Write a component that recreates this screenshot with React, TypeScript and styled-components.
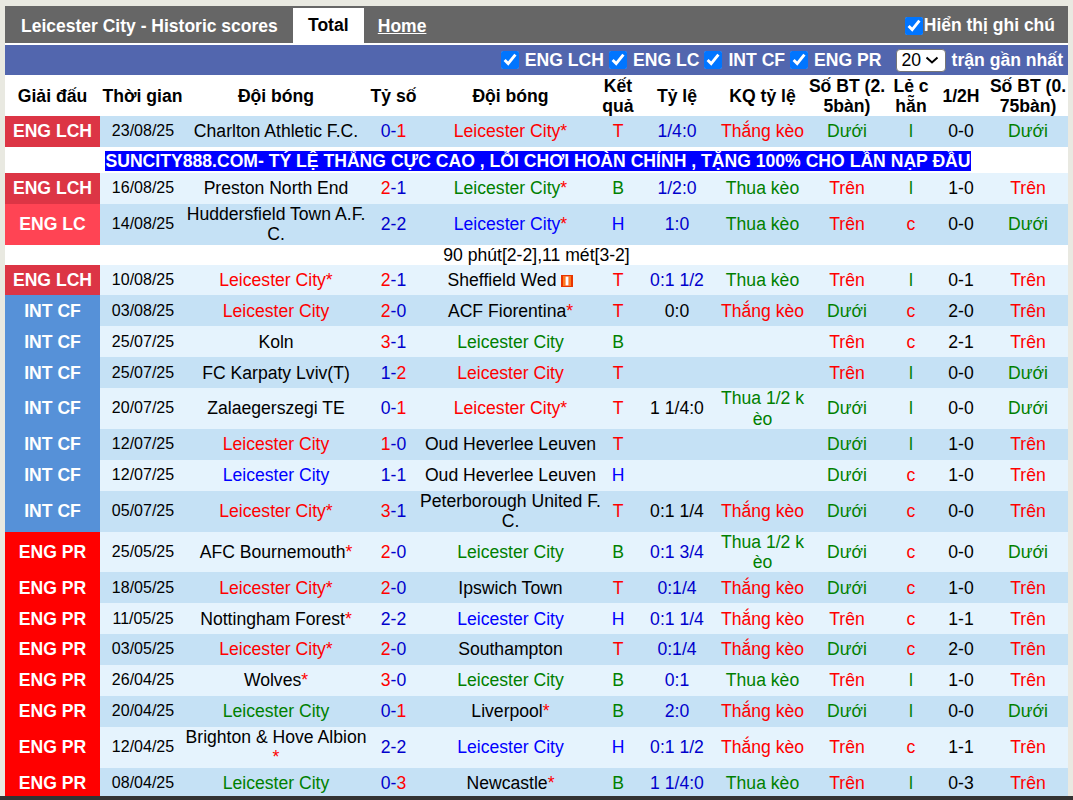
import React from 'react'
import styled, { createGlobalStyle } from 'styled-components'

type Tone = 'red' | 'blue' | 'green' | 'black'

const tones: Record<Tone, string> = {
  red: '#ff0000',
  blue: '#0000ff',
  green: '#008000',
  black: '#000000',
}

const leagues: Record<string, string> = {
  'ENG LCH': '#dc3545',
  'ENG LC': '#ff4454',
  'INT CF': '#5691d8',
  'ENG PR': '#ff0000',
}

interface Match {
  league: string
  date: string
  home: string
  homeTone?: Tone
  homeStar?: boolean
  score: [number, number]
  away: string
  awayTone?: Tone
  awayStar?: boolean
  card?: boolean
  odds?: string
  oddsBlack?: boolean
  kq?: string
  bt: string
  lc: string
  half: string
  bt2: string
  banner?: boolean
  note?: string
}

const LC = 'Leicester City'

const matches: Match[] = [
  { league: 'ENG LCH', date: '23/08/25', home: 'Charlton Athletic F.C.', score: [0, 1], away: LC, awayTone: 'red', awayStar: true, odds: '1/4:0', kq: 'Thắng kèo', bt: 'Dưới', lc: 'l', half: '0-0', bt2: 'Dưới', banner: true },
  { league: 'ENG LCH', date: '16/08/25', home: 'Preston North End', score: [2, 1], away: LC, awayTone: 'green', awayStar: true, odds: '1/2:0', kq: 'Thua kèo', bt: 'Trên', lc: 'l', half: '1-0', bt2: 'Trên' },
  { league: 'ENG LC', date: '14/08/25', home: 'Huddersfield Town A.F.C.', score: [2, 2], away: LC, awayTone: 'blue', awayStar: true, odds: '1:0', kq: 'Thua kèo', bt: 'Trên', lc: 'c', half: '0-0', bt2: 'Dưới', note: '90 phút[2-2],11 mét[3-2]' },
  { league: 'ENG LCH', date: '10/08/25', home: LC, homeTone: 'red', homeStar: true, score: [2, 1], away: 'Sheffield Wed', card: true, odds: '0:1 1/2', kq: 'Thua kèo', bt: 'Trên', lc: 'l', half: '0-1', bt2: 'Trên' },
  { league: 'INT CF', date: '03/08/25', home: LC, homeTone: 'red', score: [2, 0], away: 'ACF Fiorentina', awayStar: true, odds: '0:0', oddsBlack: true, kq: 'Thắng kèo', bt: 'Dưới', lc: 'c', half: '2-0', bt2: 'Trên' },
  { league: 'INT CF', date: '25/07/25', home: 'Koln', score: [3, 1], away: LC, awayTone: 'green', bt: 'Trên', lc: 'c', half: '2-1', bt2: 'Trên' },
  { league: 'INT CF', date: '25/07/25', home: 'FC Karpaty Lviv(T)', score: [1, 2], away: LC, awayTone: 'red', bt: 'Trên', lc: 'l', half: '0-0', bt2: 'Dưới' },
  { league: 'INT CF', date: '20/07/25', home: 'Zalaegerszegi TE', score: [0, 1], away: LC, awayTone: 'red', awayStar: true, odds: '1 1/4:0', oddsBlack: true, kq: 'Thua 1/2 kèo', bt: 'Dưới', lc: 'l', half: '0-0', bt2: 'Dưới' },
  { league: 'INT CF', date: '12/07/25', home: LC, homeTone: 'red', score: [1, 0], away: 'Oud Heverlee Leuven', bt: 'Dưới', lc: 'l', half: '1-0', bt2: 'Trên' },
  { league: 'INT CF', date: '12/07/25', home: LC, homeTone: 'blue', score: [1, 1], away: 'Oud Heverlee Leuven', bt: 'Dưới', lc: 'c', half: '1-0', bt2: 'Trên' },
  { league: 'INT CF', date: '05/07/25', home: LC, homeTone: 'red', homeStar: true, score: [3, 1], away: 'Peterborough United F.C.', odds: '0:1 1/4', oddsBlack: true, kq: 'Thắng kèo', bt: 'Dưới', lc: 'c', half: '0-0', bt2: 'Trên' },
  { league: 'ENG PR', date: '25/05/25', home: 'AFC Bournemouth', homeStar: true, score: [2, 0], away: LC, awayTone: 'green', odds: '0:1 3/4', kq: 'Thua 1/2 kèo', bt: 'Dưới', lc: 'c', half: '0-0', bt2: 'Dưới' },
  { league: 'ENG PR', date: '18/05/25', home: LC, homeTone: 'red', homeStar: true, score: [2, 0], away: 'Ipswich Town', odds: '0:1/4', kq: 'Thắng kèo', bt: 'Dưới', lc: 'c', half: '1-0', bt2: 'Trên' },
  { league: 'ENG PR', date: '11/05/25', home: 'Nottingham Forest', homeStar: true, score: [2, 2], away: LC, awayTone: 'blue', odds: '0:1 1/4', kq: 'Thắng kèo', bt: 'Trên', lc: 'c', half: '1-1', bt2: 'Trên' },
  { league: 'ENG PR', date: '03/05/25', home: LC, homeTone: 'red', homeStar: true, score: [2, 0], away: 'Southampton', odds: '0:1/4', kq: 'Thắng kèo', bt: 'Dưới', lc: 'c', half: '2-0', bt2: 'Trên' },
  { league: 'ENG PR', date: '26/04/25', home: 'Wolves', homeStar: true, score: [3, 0], away: LC, awayTone: 'green', odds: '0:1', kq: 'Thua kèo', bt: 'Trên', lc: 'l', half: '1-0', bt2: 'Trên' },
  { league: 'ENG PR', date: '20/04/25', home: LC, homeTone: 'green', score: [0, 1], away: 'Liverpool', awayStar: true, odds: '2:0', kq: 'Thắng kèo', bt: 'Dưới', lc: 'l', half: '0-0', bt2: 'Dưới' },
  { league: 'ENG PR', date: '12/04/25', home: 'Brighton & Hove Albion', homeStar: true, score: [2, 2], away: LC, awayTone: 'blue', odds: '0:1 1/2', kq: 'Thắng kèo', bt: 'Trên', lc: 'c', half: '1-1', bt2: 'Trên' },
  { league: 'ENG PR', date: '08/04/25', home: LC, homeTone: 'green', score: [0, 3], away: 'Newcastle', awayStar: true, odds: '1 1/4:0', kq: 'Thua kèo', bt: 'Trên', lc: 'l', half: '0-3', bt2: 'Trên' },
]

const columns = [95, 85, 182, 53, 181, 34, 84, 87, 82, 46, 54, 80]

const chevron =
  "url(\"data:image/svg+xml,%3Csvg xmlns='http://www.w3.org/2000/svg' width='14' height='8' viewBox='0 0 14 8'%3E%3Cpath d='M1.5 1.5 7 6.5l5.5-5' fill='none' stroke='%23000' stroke-width='2'/%3E%3C/svg%3E\")"

const resultOf = (m: Match) => {
  const leicesterHome = m.home === LC
  const us = leicesterHome ? m.score[0] : m.score[1]
  const them = leicesterHome ? m.score[1] : m.score[0]
  if (us > them) return { text: 'T', tone: 'red' as Tone }
  if (us < them) return { text: 'B', tone: 'green' as Tone }
  return { text: 'H', tone: 'blue' as Tone }
}

const Team = ({ name, tone, star, card }: { name: string; tone?: Tone; star?: boolean; card?: boolean }) => (
  <TeamCell>
    <Colored $tone={tone || 'black'}>{name}</Colored>
    {star && <Colored $tone="red">*</Colored>}
    {card && (
      <Card viewBox="0 0 12 12">
        <rect width="12" height="12" fill="#e83400" />
        <rect x="2" y="1" width="2.5" height="10" fill="#ff7a20" />
        <rect x="7.5" y="1" width="2.5" height="10" fill="#ff7a20" />
        <rect x="4.5" y="1.5" width="3" height="9" fill="#fff" />
      </Card>
    )}
  </TeamCell>
)

const Score = ({ value }: { value: [number, number] }) => {
  const [a, b] = value
  return (
    <Td>
      <Colored $tone={a > b ? 'red' : 'blue'} $navy={a <= b}>{a}</Colored>
      <Colored $tone="blue" $navy>-</Colored>
      <Colored $tone={b > a ? 'red' : 'blue'} $navy={b <= a}>{b}</Colored>
    </Td>
  )
}

const App = () => {
  return (
    <Page>
      <GlobalStyle />
      <Wrapper>
        <TopBar>
          <TopTitle>Leicester City - Historic scores</TopTitle>
          <ActiveTab>Total</ActiveTab>
          <LinkTab href="#">Home</LinkTab>
          <NoteToggle>
            <Check type="checkbox" defaultChecked />
            Hiển thị ghi chú
          </NoteToggle>
        </TopBar>
        <FilterBar>
          {['ENG LCH', 'ENG LC', 'INT CF', 'ENG PR'].map((l) => (
            <FilterLabel key={l}>
              <Check type="checkbox" defaultChecked />
              {l}
            </FilterLabel>
          ))}
          <CountSelect defaultValue="20">
            <option value="10">10</option>
            <option value="20">20</option>
          </CountSelect>
          <FilterText>trận gần nhất</FilterText>
        </FilterBar>
        <Table>
          <colgroup>
            {columns.map((w, i) => (
              <col key={i} style={{ width: w }} />
            ))}
          </colgroup>
          <thead>
            <tr>
              <Th>Giải đấu</Th>
              <Th>Thời gian</Th>
              <Th>Đội bóng</Th>
              <Th>Tỷ số</Th>
              <Th>Đội bóng</Th>
              <Th>Kết<br />quả</Th>
              <Th>Tỷ lệ</Th>
              <Th>KQ tỷ lệ</Th>
              <Th>Số BT (2.<br />5bàn)</Th>
              <Th>Lẻ c<br />hẵn</Th>
              <Th>1/2H</Th>
              <Th>Số BT (0.<br />75bàn)</Th>
            </tr>
          </thead>
          <tbody>
            {matches.map((m, i) => {
              const result = resultOf(m)
              return (
                <React.Fragment key={i}>
                  <Row $dark={i % 2 === 0}>
                    <LeagueCell $color={leagues[m.league]}>{m.league}</LeagueCell>
                    <DateCell>{m.date}</DateCell>
                    <Team name={m.home} tone={m.homeTone} star={m.homeStar} />
                    <Score value={m.score} />
                    <Team name={m.away} tone={m.awayTone} star={m.awayStar} card={m.card} />
                    <Td><Colored $tone={result.tone}>{result.text}</Colored></Td>
                    <Td><Colored $tone={m.oddsBlack ? 'black' : 'blue'} $navy={!m.oddsBlack}>{m.odds}</Colored></Td>
                    <KqCell><Colored $tone={m.kq && m.kq.startsWith('Thắng') ? 'red' : 'green'}>{m.kq}</Colored></KqCell>
                    <Td><Colored $tone={m.bt === 'Trên' ? 'red' : 'green'}>{m.bt}</Colored></Td>
                    <Td><Colored $tone={m.lc === 'c' ? 'red' : 'green'}>{m.lc}</Colored></Td>
                    <Td>{m.half}</Td>
                    <Td><Colored $tone={m.bt2 === 'Trên' ? 'red' : 'green'}>{m.bt2}</Colored></Td>
                  </Row>
                  {m.banner && (
                    <BannerRow>
                      <BannerCell colSpan={12}>
                        <BannerText>SUNCITY888.COM- TÝ LỆ THẮNG CỰC CAO , LỖI CHƠI HOÀN CHỈNH , TẶNG 100% CHO LẦN NẠP ĐẦU</BannerText>
                      </BannerCell>
                    </BannerRow>
                  )}
                  {m.note && (
                    <NoteRow>
                      <NoteCell colSpan={12}>{m.note}</NoteCell>
                    </NoteRow>
                  )}
                </React.Fragment>
              )
            })}
          </tbody>
        </Table>
      </Wrapper>
      <BottomStrip />
    </Page>
  )
}

export default App

const GlobalStyle = createGlobalStyle`
html, body {
  margin: 0;
  padding: 0;
  height: 800px;
  overflow: hidden;
  background: #e9e9e1;
}
* {
  box-sizing: border-box;
}
`
const Page = styled.div`
display: flex;
flex-direction: column;
height: 800px;
font-family: "Liberation Sans", Arial, sans-serif;
font-size: 17.6px;
color: #000;
`
const Wrapper = styled.div`
flex: 1;
min-height: 0;
overflow: hidden;
margin: 6px 5px 0 5px;
background: #fff;
`
const BottomStrip = styled.div`
height: 4px;
background: #333;
flex-shrink: 0;
`
const TopBar = styled.div`
display: flex;
align-items: flex-end;
height: 37px;
background: #666;
color: #fff;
font-weight: bold;
font-size: 17.5px;
`
const TopTitle = styled.div`
padding: 0 15px 0 16px;
height: 35px;
line-height: 36px;
`
const ActiveTab = styled.div`
width: 71px;
height: 35px;
line-height: 35px;
text-align: center;
background: #fff;
color: #000;
`
const LinkTab = styled.a`
margin-left: 14px;
height: 35px;
line-height: 36px;
color: #fff;
text-decoration: underline;
`
const NoteToggle = styled.label`
display: flex;
align-items: center;
align-self: center;
gap: 1px;
margin: 2px 13px 0 auto;
`
const Check = styled.input`
width: 18px;
height: 18px;
margin: 0;
accent-color: #0075ff;
`
const FilterBar = styled.div`
display: flex;
justify-content: flex-end;
align-items: center;
height: 30px;
margin-top: 2px;
padding-right: 5px;
background: #5266ae;
color: #fff;
font-weight: bold;
`
const FilterLabel = styled.label`
display: flex;
align-items: center;
gap: 6px;
margin-right: 5px;
`
const CountSelect = styled.select`
appearance: none;
width: 50px;
height: 23px;
margin: 0 6px 0 9px;
padding: 0 0 0 5px;
font-size: 17.6px;
font-family: inherit;
color: #000;
background: #fff ${chevron} no-repeat right 6px center;
border: 1px solid #767676;
border-radius: 4px;
`
const FilterText = styled.span`
font-weight: bold;
`
const Table = styled.table`
width: 1063px;
table-layout: fixed;
border-collapse: separate;
border-spacing: 0;
margin-top: 1px;
`
const Th = styled.th`
height: 40px;
padding: 0;
font-weight: bold;
line-height: 20px;
text-align: center;
`
const Row = styled.tr<{ $dark: boolean }>`
height: 30.9px;
background: ${(p) => (p.$dark ? '#c5e1f5' : '#e5f3fd')};
`
const Td = styled.td`
padding: 0;
text-align: center;
line-height: 20.4px;
`
const LeagueCell = styled(Td)<{ $color: string }>`
background: ${(p) => p.$color};
color: #fff;
font-weight: bold;
`
const DateCell = styled(Td)`
font-size: 16px;
padding-left: 1px;
`
const TeamCell = styled(Td)`
word-break: break-all;
`
const KqCell = styled(Td)`
word-break: break-all;
`
const Colored = styled.span<{ $tone: Tone; $navy?: boolean }>`
color: ${(p) => (p.$navy ? '#0000cc' : tones[p.$tone])};
`
const Card = styled.svg`
width: 12px;
height: 12px;
margin-left: 5px;
vertical-align: -1px;
`
const BannerRow = styled.tr`
height: 26px;
background: #fff;
`
const BannerCell = styled.td`
padding: 3px 0 0 3px;
text-align: center;
line-height: 20px;
`
const BannerText = styled.span`
background: #0000ff;
color: #fff;
font-weight: bold;
`
const NoteRow = styled.tr`
height: 20px;
background: #fff;
`
const NoteCell = styled.td`
padding: 0;
text-align: center;
line-height: 20px;
`
